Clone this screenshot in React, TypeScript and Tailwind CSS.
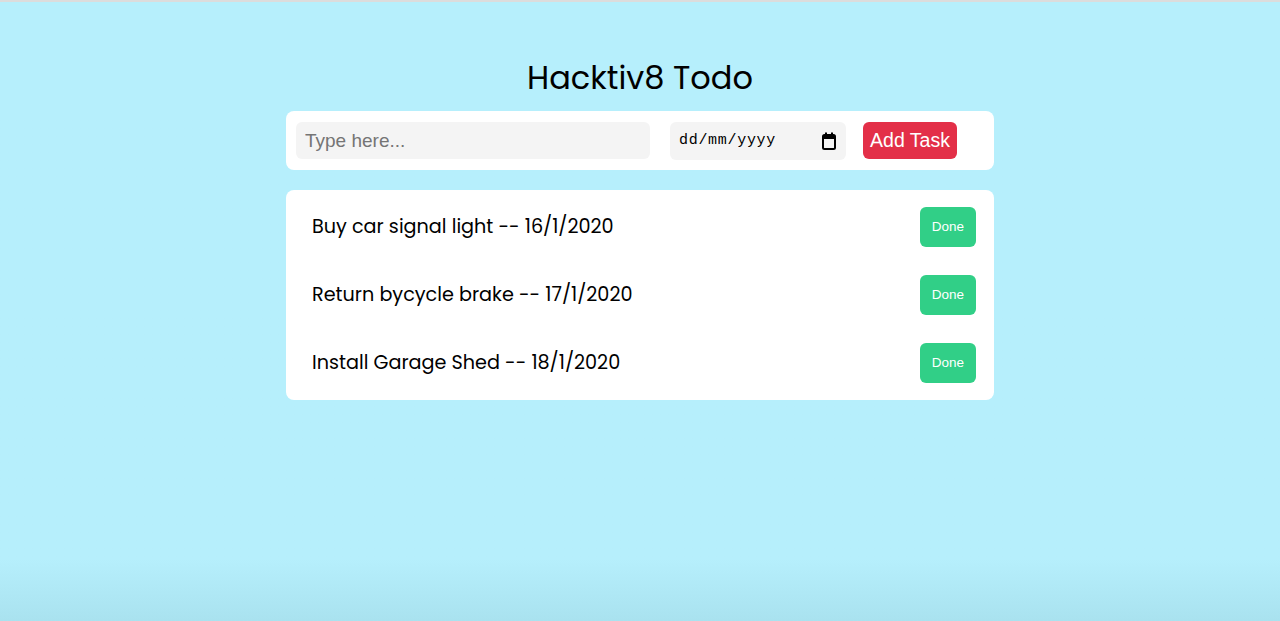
import { useState } from 'react'

type Todo = {
  id: number
  title: string
  date: string
}

const initialTodos: Todo[] = [
  { id: 1, title: 'Buy car signal light', date: '16/1/2020' },
  { id: 2, title: 'Return bycycle brake', date: '17/1/2020' },
  { id: 3, title: 'Install Garage Shed', date: '18/1/2020' },
]

function CalendarIcon() {
  return (
    <svg width="14" height="18" viewBox="0 0 14 18" fill="none">
      <rect x="1" y="3" width="12" height="14" rx="1.5" stroke="#000" strokeWidth="2" />
      <rect x="1" y="3" width="12" height="4" fill="#000" />
      <rect x="3" y="0.5" width="2" height="3" fill="#000" />
      <rect x="9" y="0.5" width="2" height="3" fill="#000" />
    </svg>
  )
}

export default function App() {
  const [todos, setTodos] = useState<Todo[]>(initialTodos)
  const [text, setText] = useState('')

  const handleAdd = () => {
    if (!text.trim()) return
    setTodos([...todos, { id: Date.now(), title: text, date: '19/1/2020' }])
    setText('')
  }

  const handleDone = (id: number) => {
    setTodos(todos.filter((todo) => todo.id !== id))
  }

  return (
    <div className="min-h-[621px] border-t-2 border-[#dcdcdc] bg-linear-to-b from-[#b6effc] from-[90%] to-[#a9e2ef] font-['Poppins','Inter','Noto_Sans',sans-serif]">
      <div className="mx-auto w-[708px] pt-[54px]">
        {/* Title */}
        <h1 className="text-center text-[32px] leading-[44px] text-black">
          Hacktiv8 Todo
        </h1>

        {/* Form */}
        <div className="mt-[11px] flex h-[59px] items-center rounded-lg bg-white px-[10px]">
          <input
            type="text"
            value={text}
            onChange={(e) => setText(e.target.value)}
            placeholder="Type here..."
            className="h-[37px] w-[354px] rounded-md bg-[#f4f4f4] px-[9px] font-['Liberation_Sans',Arial,sans-serif] text-[19px] text-black outline-none placeholder:text-[#757575]"
          />
          <div className="ml-[20px] flex h-[38px] w-[176px] items-center justify-between rounded-md bg-[#f4f4f4] pl-[9px] pr-[10px]">
            <span className="pt-[2px] font-['Liberation_Mono','Courier_New',monospace] text-[15px] tracking-[0.7px] text-black">
              dd/mm/yyyy
            </span>
            <CalendarIcon />
          </div>
          <button
            onClick={handleAdd}
            className="ml-[17px] h-[37px] w-[94px] rounded-md bg-[#e32f48] font-['Liberation_Sans',Arial,sans-serif] text-[19.5px] text-white"
          >
            Add Task
          </button>
        </div>

        {/* Todo list */}
        <div className="mt-[20px] rounded-lg bg-white py-[17px] pl-[26px] pr-[18px]">
          <div className="flex flex-col gap-[28px]">
            {todos.map((todo) => (
              <div key={todo.id} className="flex h-[40px] items-center justify-between">
                <span className="text-[19.2px] text-black">
                  {todo.title} -- {todo.date}
                </span>
                <button
                  onClick={() => handleDone(todo.id)}
                  className="h-[40px] w-[56px] rounded-md bg-[#31cf87] font-['Liberation_Sans',Arial,sans-serif] text-[13.5px] text-white"
                >
                  Done
                </button>
              </div>
            ))}
          </div>
        </div>
      </div>
    </div>
  )
}
